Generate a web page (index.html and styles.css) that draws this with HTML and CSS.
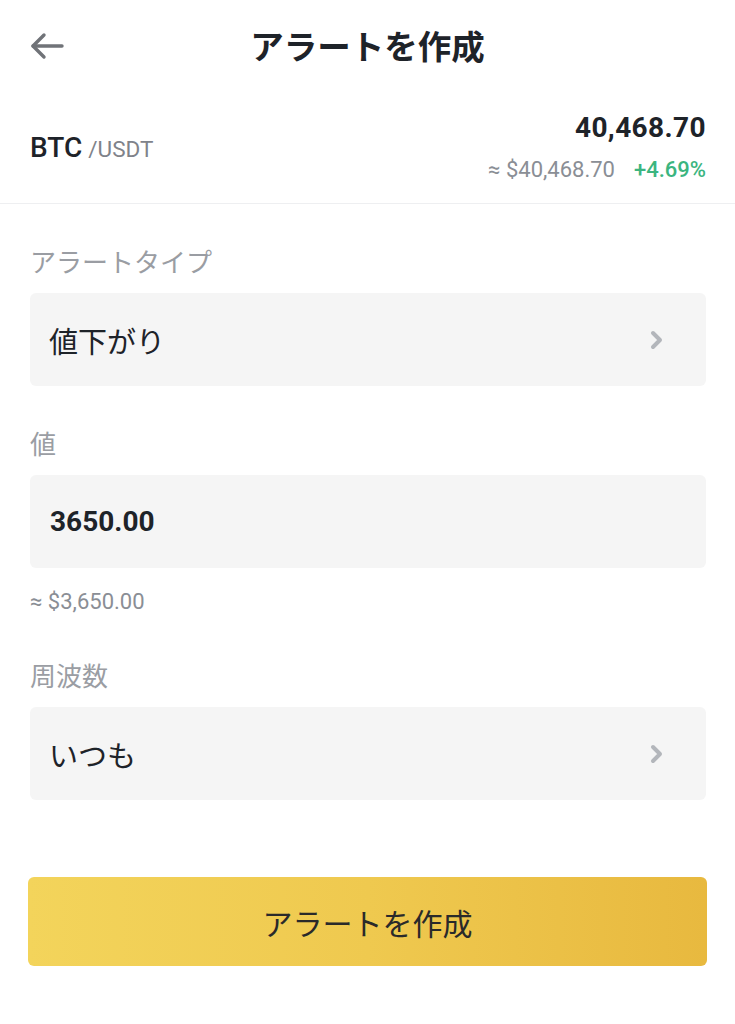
FILE: index.html
```html
<!DOCTYPE html>
<html lang="ja">
<head>
<meta charset="utf-8">
<title>アラートを作成</title>
<link rel="stylesheet" href="styles.css">
</head>
<body>
<div class="page">
  <header class="header">
    <div class="back">
      <svg width="34" height="28" viewBox="0 0 34 28" fill="none" stroke="#707378" stroke-width="3.4" stroke-linecap="round" stroke-linejoin="round">
        <path d="M32 14H3"/>
        <path d="M14 3L3 14l11 11"/>
      </svg>
    </div>
    <h1 class="title">アラートを作成</h1>
    <div></div>
  </header>

  <section class="pair">
    <div class="pair-name"><span class="base">BTC</span><span class="quote">/USDT</span></div>
    <div class="pair-price">
      <div class="price">40,468.70</div>
      <div class="sub"><span class="fiat">≈ $40,468.70</span><span class="change">+4.69%</span></div>
    </div>
  </section>

  <section class="form">
    <div class="field">
      <div class="label">アラートタイプ</div>
      <div class="box">
        <span class="value">値下がり</span>
        <svg class="chev" width="15" height="20" viewBox="0 0 15 20" fill="none" stroke="#b3b6bb" stroke-width="4" stroke-linecap="round" stroke-linejoin="round"><path d="M4 3l7 7-7 7"/></svg>
      </div>
    </div>

    <div class="field with-hint">
      <div class="label">値</div>
      <div class="box">
        <span class="value num">3650.00</span>
      </div>
      <div class="hint">≈ $3,650.00</div>
    </div>

    <div class="field freq">
      <div class="label">周波数</div>
      <div class="box">
        <span class="value">いつも</span>
        <svg class="chev" width="15" height="20" viewBox="0 0 15 20" fill="none" stroke="#b3b6bb" stroke-width="4" stroke-linecap="round" stroke-linejoin="round"><path d="M4 3l7 7-7 7"/></svg>
      </div>
    </div>

    <button class="submit">アラートを作成</button>
  </section>
</div>
</body>
</html>
```

FILE: styles.css
```css
* { box-sizing: border-box; }
html, body { margin: 0; padding: 0; background: #ffffff; }
body {
  font-family: "Noto Sans CJK JP", "Noto Sans", sans-serif;
  color: #1e2329;
  width: 735px;
}
.page { width: 735px; }

.header {
  height: 90px;
  display: grid;
  grid-template-columns: 1fr auto 1fr;
  align-items: center;
}
.back { padding-left: 30px; display: flex; align-items: center; padding-top: 1px; }
.title {
  margin: 0;
  font-size: 33.5px;
  font-weight: 700;
  line-height: 40px;
  color: #1e2329;
}

.pair {
  height: 114px;
  display: flex;
  justify-content: space-between;
  align-items: center;
  padding: 0 29px 0 30px;
  border-bottom: 1px solid #eeeff1;
}
.pair-name { display: flex; align-items: baseline; font-family: Roboto, "Liberation Sans", sans-serif; padding-top: 2px; }
.base { font-size: 28px; font-weight: 500; color: #1e2329; }
.quote { font-size: 22.5px; color: #7f838a; margin-left: 6px; }
.pair-price {
  display: flex;
  flex-direction: column;
  align-items: flex-end;
  gap: 13px;
  font-family: Roboto, "Liberation Sans", sans-serif;
}
.price { font-size: 28px; font-weight: 700; line-height: 33px; letter-spacing: 0.4px; color: #1e2329; }
.sub { display: flex; gap: 19px; font-size: 22px; line-height: 26px; }
.fiat { color: #8a8e95; }
.change { color: #3bb57f; font-weight: 500; }

.form { padding: 40px 29px 0 30px; }
.field { margin-bottom: 40px; }
.field.with-hint { margin-bottom: 43px; }
.field.freq { margin-bottom: 77px; }
.label {
  font-size: 26px;
  line-height: 34px;
  color: #9a9da3;
  margin-bottom: 15px;
}
.box {
  height: 93px;
  background: #f5f5f5;
  border-radius: 6px;
  display: flex;
  align-items: center;
  justify-content: space-between;
  padding: 0 42px 0 19px;
}
.value { font-size: 29px; color: #1e2329; line-height: 36px; }
.value.num { font-family: Roboto, "Liberation Sans", sans-serif; font-weight: 700; font-size: 28px; padding-left: 1px; }
.chev { display: block; }
.hint {
  margin-top: 21px;
  font-family: Roboto, "Liberation Sans", sans-serif;
  font-size: 22px;
  line-height: 26px;
  color: #8a8e95;
}

.submit {
  display: flex;
  align-items: center;
  justify-content: center;
  width: calc(100% + 3px);
  margin-left: -2px;
  height: 89px;
  border: none;
  border-radius: 6px;
  background: linear-gradient(90deg, #f3d45b 0%, #efc94f 50%, #e8b93f 100%);
  font-family: "Noto Sans CJK JP", sans-serif;
  font-size: 30px;
  color: #2a2a2a;
  padding: 0;
}
```
